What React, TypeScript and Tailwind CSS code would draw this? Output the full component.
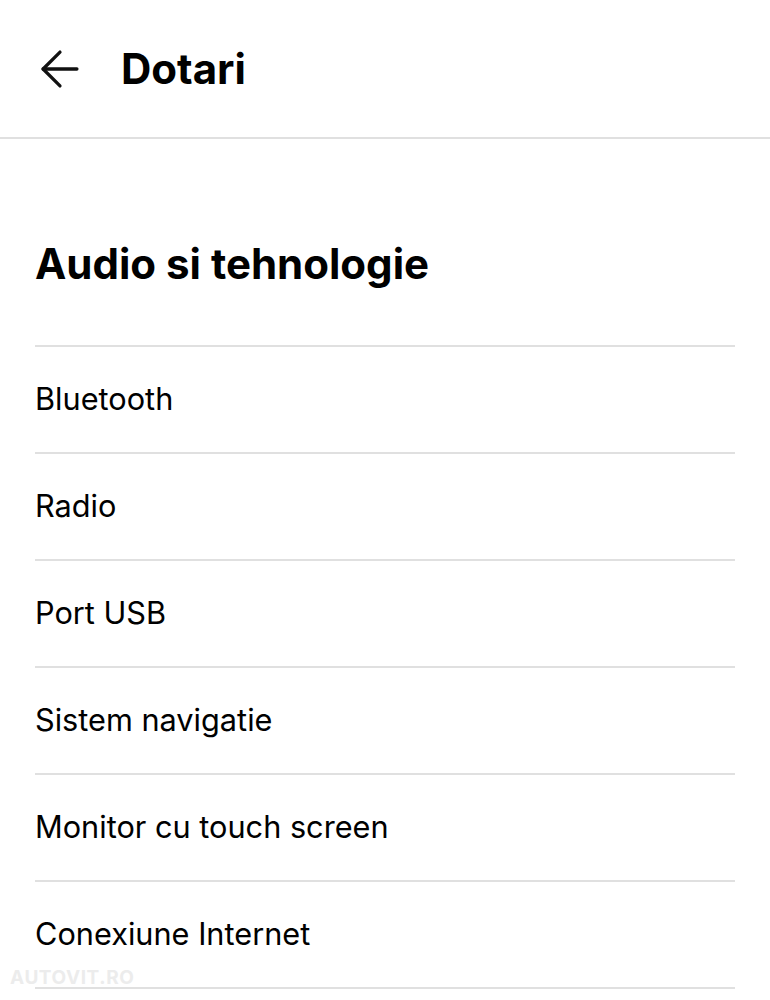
import { ArrowLeft } from "lucide-react";

const items = [
  "Bluetooth",
  "Radio",
  "Port USB",
  "Sistem navigatie",
  "Monitor cu touch screen",
  "Conexiune Internet",
];

const App: React.FC = () => {
  return (
    <div className="relative min-h-screen bg-white text-black font-['Inter',sans-serif]">
      <div className="flex h-[139px] items-center border-b-2 border-[#e0e0e0]">
        <button className="ml-[31px] mr-[32px] flex items-center">
          <ArrowLeft size={58} strokeWidth={1.35} className="text-[#111]" />
        </button>
        <h1 className="text-[42px] font-bold">Dotari</h1>
      </div>
      <div className="px-[35px]">
        <h2 className="pt-[96px] pb-[52px] text-[42px] font-bold leading-[58px]">
          Audio si tehnologie
        </h2>
        <div>
          {items.map((item) => (
            <div
              key={item}
              className="flex h-[107px] items-center border-t-2 border-[#e0e0e0] text-[30.7px]"
            >
              {item}
            </div>
          ))}
          <div className="border-t-2 border-[#e0e0e0]"></div>
        </div>
      </div>
      {/* watermark */}
      <span className="absolute left-[10px] top-[964px] text-[19px] font-bold tracking-[0.03em] text-[#ececec] select-none">
        AUTOVIT.RO
      </span>
    </div>
  );
};

export default App;
